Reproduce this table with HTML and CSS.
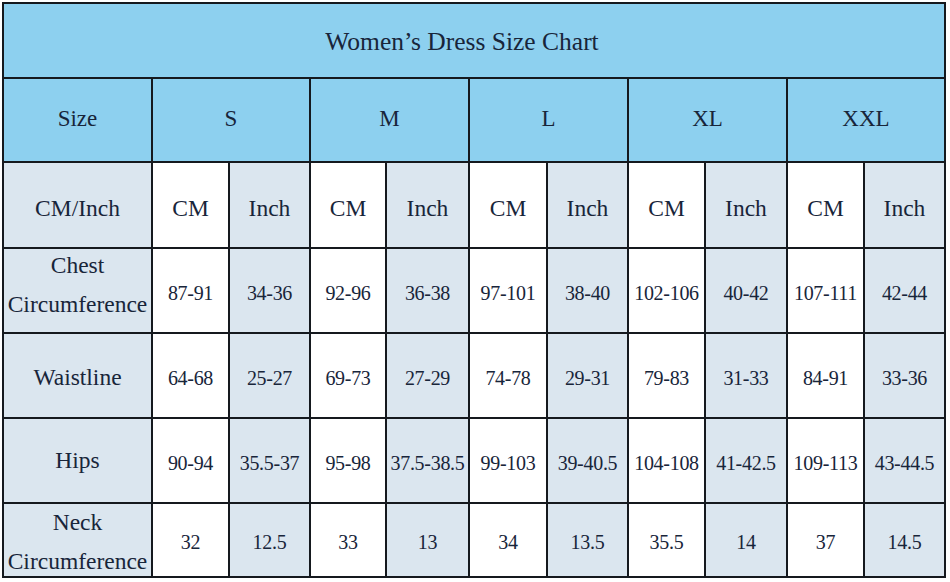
FILE: index.html
```html
<!DOCTYPE html>
<html lang="en">
<head>
<meta charset="utf-8">
<title>Women's Dress Size Chart</title>
<link rel="stylesheet" href="styles.css">
</head>
<body>
<div class="chart">
  <div class="cell title">Women’s Dress Size Chart</div>

  <div class="cell head">Size</div>
  <div class="cell head span2">S</div>
  <div class="cell head span2">M</div>
  <div class="cell head span2">L</div>
  <div class="cell head span2">XL</div>
  <div class="cell head span2">XXL</div>

  <div class="cell label units">CM/Inch</div>
  <div class="cell unit cm">CM</div><div class="cell unit in">Inch</div>
  <div class="cell unit cm">CM</div><div class="cell unit in">Inch</div>
  <div class="cell unit cm">CM</div><div class="cell unit in">Inch</div>
  <div class="cell unit cm">CM</div><div class="cell unit in">Inch</div>
  <div class="cell unit cm">CM</div><div class="cell unit in">Inch</div>

  <div class="cell label two up">Chest<br>Circumference</div>
  <div class="cell num cm">87-91</div><div class="cell num in">34-36</div>
  <div class="cell num cm">92-96</div><div class="cell num in">36-38</div>
  <div class="cell num cm">97-101</div><div class="cell num in">38-40</div>
  <div class="cell num cm">102-106</div><div class="cell num in">40-42</div>
  <div class="cell num cm">107-111</div><div class="cell num in">42-44</div>

  <div class="cell label">Waistline</div>
  <div class="cell num cm">64-68</div><div class="cell num in">25-27</div>
  <div class="cell num cm">69-73</div><div class="cell num in">27-29</div>
  <div class="cell num cm">74-78</div><div class="cell num in">29-31</div>
  <div class="cell num cm">79-83</div><div class="cell num in">31-33</div>
  <div class="cell num cm">84-91</div><div class="cell num in">33-36</div>

  <div class="cell label hips">Hips</div>
  <div class="cell num cm">90-94</div><div class="cell num in">35.5-37</div>
  <div class="cell num cm">95-98</div><div class="cell num in">37.5-38.5</div>
  <div class="cell num cm">99-103</div><div class="cell num in">39-40.5</div>
  <div class="cell num cm">104-108</div><div class="cell num in">41-42.5</div>
  <div class="cell num cm">109-113</div><div class="cell num in">43-44.5</div>

  <div class="cell label two">Neck<br>Circumference</div>
  <div class="cell num cm">32</div><div class="cell num in">12.5</div>
  <div class="cell num cm">33</div><div class="cell num in">13</div>
  <div class="cell num cm">34</div><div class="cell num in">13.5</div>
  <div class="cell num cm">35.5</div><div class="cell num in">14</div>
  <div class="cell num cm">37</div><div class="cell num in">14.5</div>
</div>
</body>
</html>
```

FILE: styles.css
```css
html, body {
  margin: 0;
  padding: 0;
  background: #ffffff;
}

body {
  padding: 2px 0 0 2px;
  font-family: "Liberation Serif", "Times New Roman", serif;
  color: #18253a;
}

.chart {
  display: grid;
  width: 944px;
  box-sizing: border-box;
  padding: 2px;
  gap: 2px;
  background: #15191e;
  grid-template-columns: 147px 75px 79px 74px 81px 76px 79px 75px 80px 75px 79px;
  grid-template-rows: 73px 82px 84px 83px 83px 83px 72px;
}

.cell {
  display: flex;
  align-items: center;
  justify-content: center;
  text-align: center;
  white-space: nowrap;
  background: #ffffff;
}

.title {
  grid-column: 1 / -1;
  background: #8dd0ef;
  font-size: 25.5px;
  padding-top: 3px;
  padding-right: 24px;
}

.head {
  background: #8dd0ef;
  font-size: 23px;
  padding-bottom: 2px;
}

.span2 {
  grid-column: span 2;
}

.label {
  background: #dbe6ef;
  font-size: 23.5px;
  padding-top: 3px;
}

.units {
  padding-top: 6px;
}

.hips {
  padding-top: 0;
}

.two {
  line-height: 39px;
}

.up {
  padding-top: 0;
  padding-bottom: 12px;
}

.unit {
  font-size: 23.5px;
  padding-top: 6px;
}

.num {
  font-size: 20px;
  letter-spacing: -0.3px;
  padding-top: 5px;
}

.cm {
  background: #ffffff;
}

.in {
  background: #dbe6ef;
}
```
